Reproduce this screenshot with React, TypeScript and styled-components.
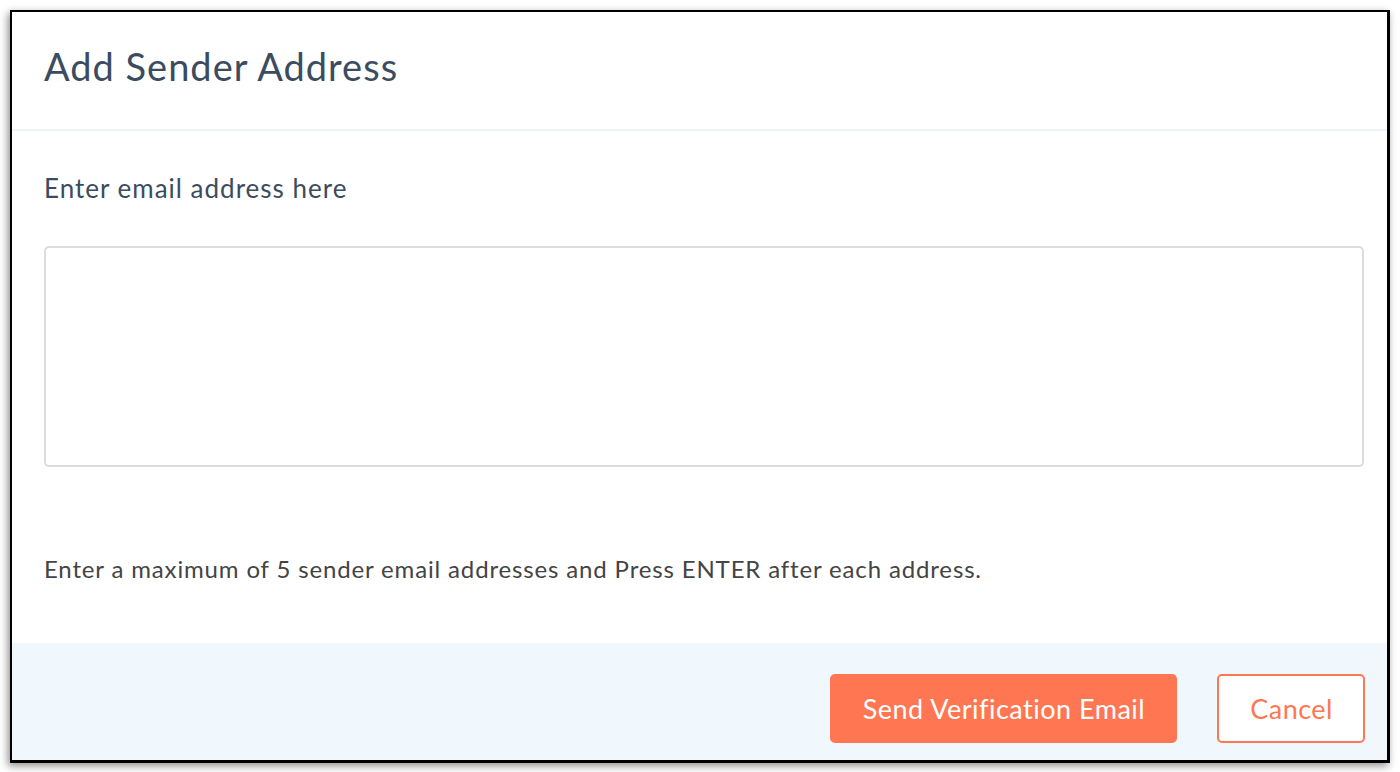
import styled, { createGlobalStyle } from "styled-components";

const GlobalStyle = createGlobalStyle`
  html, body {
    margin: 0;
    padding: 0;
    background: #ffffff;
  }
  * {
    box-sizing: border-box;
  }
`;

const App = () => {
  return (
    <Page>
      <GlobalStyle />
      <Dialog>
        <Header>
          <Title>Add Sender Address</Title>
        </Header>
        <Body>
          <Label htmlFor="sender-emails">Enter email address here</Label>
          <EmailBox id="sender-emails" />
          <Hint>
            Enter a maximum of 5 sender email addresses and Press ENTER after
            each address.
          </Hint>
        </Body>
        <Footer>
          <Button $variant="primary">Send Verification Email</Button>
          <Button $variant="outline">Cancel</Button>
        </Footer>
      </Dialog>
    </Page>
  );
};

const Page = styled.div`
  width: 1400px;
  height: 772px;
  padding: 10px 10px 9px 10px;
  font-family: Lato, "Open Sans", sans-serif;
`;

const Dialog = styled.div`
  display: flex;
  flex-direction: column;
  height: 100%;
  background: #ffffff;
  border: 2px solid #000000;
  border-right-width: 3px;
  border-bottom-width: 3px;
  box-shadow: -2px 3px 8px rgba(0, 0, 0, 0.45);
`;

const Header = styled.div`
  display: flex;
  align-items: center;
  height: 119px;
  padding: 0 32px 10px;
  border-bottom: 2px solid #eef3f7;
`;

const Title = styled.h1`
  margin: 0;
  font-size: 38px;
  font-weight: 400;
  letter-spacing: 1px;
  color: #3b4c5f;
`;

const Body = styled.div`
  display: flex;
  flex-direction: column;
  flex: 1;
  padding: 42px 23px 0 32px;
`;

const Label = styled.label`
  font-size: 26px;
  line-height: 30px;
  letter-spacing: 1px;
  color: #3b4c5f;
`;

const EmailBox = styled.textarea`
  display: block;
  margin-top: 43px;
  width: 100%;
  height: 221px;
  border: 2px solid #dcdcdc;
  border-radius: 5px;
  resize: none;
  outline: none;
  font-family: inherit;
  font-size: 20px;
`;

const Hint = styled.p`
  margin: 87px 0 0;
  font-size: 24px;
  line-height: 30px;
  letter-spacing: 0.85px;
  color: #444444;
`;

const Footer = styled.div`
  display: flex;
  justify-content: flex-end;
  align-items: center;
  gap: 40px;
  height: 117px;
  padding: 14px 22px 0 0;
  background: #f0f7fd;
`;

const Button = styled.button<{ $variant: "primary" | "outline" }>`
  height: 69px;
  padding: 0 30px 0 31px;
  border-radius: 5px;
  border: 2px solid #ff7752;
  background: ${(p) => (p.$variant === "primary" ? "#ff7752" : "#ffffff")};
  color: ${(p) => (p.$variant === "primary" ? "#ffffff" : "#ff7752")};
  font-family: inherit;
  font-size: 27px;
  letter-spacing: 0.5px;
  cursor: pointer;
`;

export default App;
